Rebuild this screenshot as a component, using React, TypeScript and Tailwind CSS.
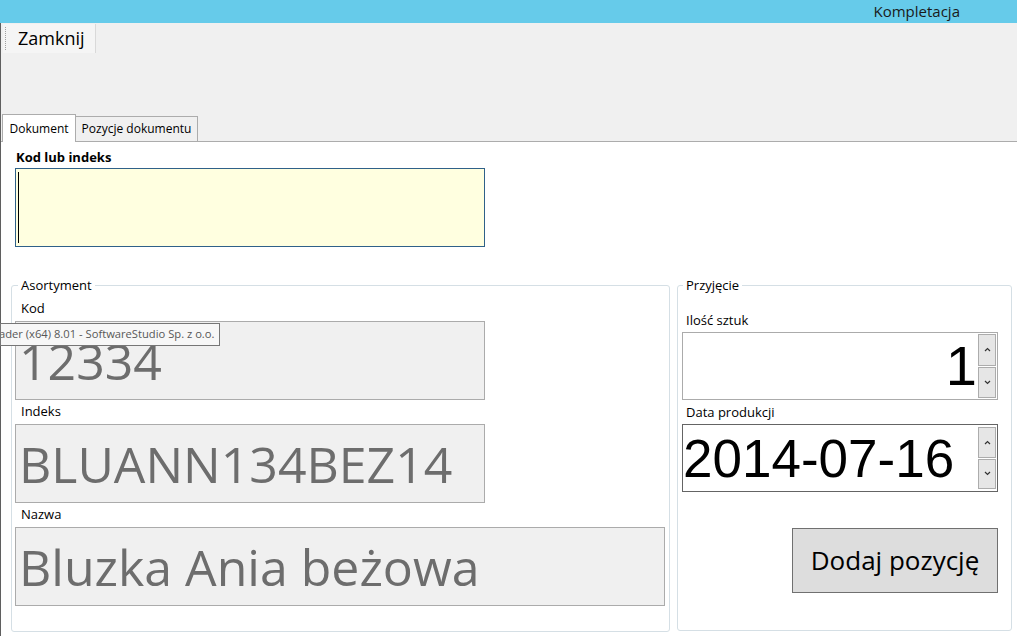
const ui = "font-['Open_Sans','Noto_Sans',sans-serif]";

function Chevron({ up }: { up?: boolean }) {
  return (
    <svg width="7" height="5" viewBox="0 0 7 5" className="block">
      <path
        d={up ? "M1 4 L3.5 1.5 L6 4" : "M1 1 L3.5 3.5 L6 1"}
        fill="none"
        stroke="#333"
        strokeWidth="1.2"
      />
    </svg>
  );
}

function Spin({ h }: { h: string }) {
  return (
    <div className="flex flex-col gap-[1px]">
      <div className={`${h} w-[18px] bg-[#e6e6e6] border border-[#acacac] flex items-center justify-center`}>
        <Chevron up />
      </div>
      <div className={`${h} w-[18px] bg-[#e6e6e6] border border-[#acacac] flex items-center justify-center`}>
        <Chevron />
      </div>
    </div>
  );
}

function Field({ label, value, wide, first }: { label: string; value: string; wide?: boolean; first?: boolean }) {
  return (
    <>
      <div className={`${first ? "mt-[6px]" : "mt-[2px]"} ml-[9px] h-[18px] leading-[18px] text-[13px] text-black`}>{label}</div>
      <div
        className={`mt-[4px] ml-[3px] h-[79px] ${wide ? "w-[650px]" : "w-[470px]"} bg-[#f0f0f0] border border-[#ababab] flex items-center pl-[3px] text-[50px] leading-none text-[#6d6d6d] overflow-hidden whitespace-nowrap`}
      >
        {value}
      </div>
    </>
  );
}

export default function App() {
  return (
    <div className={`${ui} relative w-[1017px] h-[636px] overflow-hidden bg-white flex flex-col`}>
      {/* title bar */}
      <div className="h-[23px] bg-[#66cbea] flex items-center justify-end pr-[57px] text-[15px] text-[#1a1a1a]">
        Kompletacja
      </div>

      <div className="flex-1 flex flex-col border-l border-[#5f5f5f]">
        {/* toolbar */}
        <div className="h-[91px] bg-[#f0f0f0] pt-[1px] pl-[2px]">
          <div className="flex h-[29px] w-[93px] bg-[#f5f5f5] border-r border-[#d9d9d9]">
            <div className="w-[3px] ml-[2px] my-[3px] border-l border-dotted border-[#a0a0a0]" />
            <div className="flex-1 flex items-center pl-[10px] text-[18px] text-black">Zamknij</div>
          </div>
        </div>

        {/* tabs */}
        <div className="h-[28px] bg-[#f0f0f0] flex items-end border-b border-[#acacac] pl-[1px]">
          <div className="relative z-10 -mb-px h-[28px] w-[74px] bg-white border border-b-0 border-[#acacac] flex items-center justify-center text-[12px] text-black">
            Dokument
          </div>
          <div className="h-[25px] w-[122px] bg-[#f0f0f0] border border-b-0 border-l-0 border-[#acacac] flex items-center justify-center text-[12px] text-black">
            Pozycje dokumentu
          </div>
        </div>

        {/* content */}
        <div className="flex-1 bg-white flex flex-col">
          <div className="mt-[6px] ml-[15px] h-[18px] leading-[18px] text-[13px] font-bold text-black">Kod lub indeks</div>
          <div className="mt-[2px] ml-[14px] h-[79px] w-[470px] bg-[#ffffe0] border border-[#2f6189] py-[3px] pl-[2px]">
            <div className="w-[1px] h-full bg-black" />
          </div>

          <div className="mt-[30px] flex gap-[7px] ml-[10px]">
            <fieldset className="w-[659px] h-[355px] border border-[#d5dfe5] rounded-[3px] flex flex-col">
              <legend className="ml-[6px] px-[3px] h-[16px] leading-[16px] text-[13px] text-black">Asortyment</legend>
              <Field label="Kod" value="12334" first />
              <Field label="Indeks" value="BLUANN134BEZ14" />
              <Field label="Nazwa" value="Bluzka Ania beżowa" wide />
            </fieldset>

            <fieldset className="w-[335px] h-[354px] border border-[#d5dfe5] rounded-[3px] flex flex-col">
              <legend className="ml-[5px] px-[3px] h-[16px] leading-[16px] text-[13px] text-black">Przyjęcie</legend>
              <div className="mt-[18px] ml-[8px] h-[18px] leading-[18px] text-[13px] text-black">Ilość sztuk</div>
              <div className="mt-[3px] ml-[4px] h-[68px] w-[316px] border border-[#ababab] bg-white flex items-stretch p-[1px]">
                <div className="flex-1 flex items-center justify-end pr-[1px] font-['Liberation_Sans',Arial,sans-serif] text-[56px] leading-none text-black">
                  1
                </div>
                <Spin h="h-[32px]" />
              </div>
              <div className="mt-[3px] ml-[8px] h-[18px] leading-[18px] text-[13px] text-black">Data produkcji</div>
              <div className="mt-[3px] ml-[4px] h-[68px] w-[316px] border border-[#646464] bg-white flex items-stretch pt-[2px] pb-[2px] pr-[1px]">
                <div className="flex-1 flex items-center font-['Liberation_Sans',Arial,sans-serif] text-[53px] leading-none text-black">
                  2014-07-16
                </div>
                <Spin h="h-[31px]" />
              </div>
              <div className="mt-[36px] ml-[114px] h-[65px] w-[206px] bg-[#dddddd] border border-[#707070] flex items-center justify-center text-[26px] text-black">
                Dodaj pozycję
              </div>
            </fieldset>
          </div>
        </div>
      </div>

      {/* tooltip */}
      <div className="absolute left-0 top-[323px] h-[23px] w-[220px] bg-[#f7f7f7] border border-[#767676] overflow-hidden flex items-center">
        <span className="-ml-[2px] whitespace-nowrap text-[11.2px] text-[#575757]">ader (x64) 8.01 - SoftwareStudio Sp. z o.o.</span>
      </div>
    </div>
  );
}
